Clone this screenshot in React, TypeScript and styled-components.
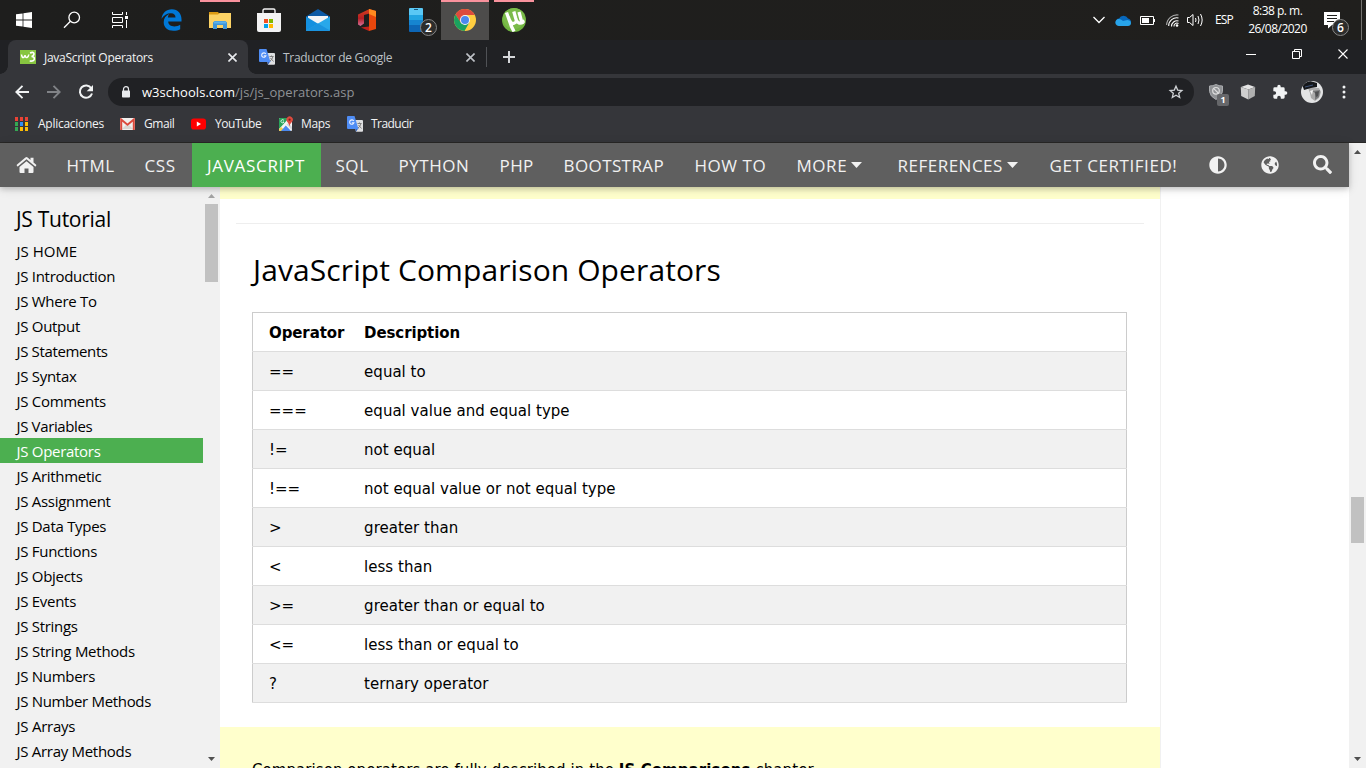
import React from 'react';
import styled, { createGlobalStyle } from 'styled-components';
import { FaAdjust, FaGlobeAmericas, FaSearch } from 'react-icons/fa';

const UI_FONT = '"Open Sans", "Noto Sans", sans-serif';

const GlobalStyle = createGlobalStyle`
  * { box-sizing: border-box; }
  body { margin: 0; background: #fff; }
  svg { display: block; flex: none; }
`;

const Screen = styled.div`
  width: 1366px;
  height: 768px;
  overflow: hidden;
  display: flex;
  flex-direction: column;
  font-family: ${UI_FONT};
`;

/* ---------- Windows taskbar ---------- */

const Taskbar = styled.header`
  height: 40px;
  flex: none;
  display: flex;
  background: linear-gradient(90deg, #1e1e1d, #201f1d);
  color: #fff;
`;

const TaskCell = styled.div<{ $width?: number; $active?: boolean; $line?: number; $gap?: number }>`
  position: relative;
  width: ${(p) => p.$width ?? 49}px;
  margin-left: ${(p) => p.$gap ?? 0}px;
  height: 40px;
  display: flex;
  align-items: center;
  justify-content: center;
  background: ${(p) => (p.$active ? '#4d4c4b' : 'transparent')};
  &::before {
    content: '';
    position: absolute;
    top: 0;
    left: 50%;
    width: ${(p) => p.$line ?? 0}px;
    height: 2px;
    transform: translateX(-50%);
    background: #f9929d;
  }
`;

const CountBadge = styled.span<{ $left: number }>`
  position: absolute;
  left: ${(p) => p.$left}px;
  top: 19px;
  width: 17px;
  height: 17px;
  border: 1px solid #868686;
  border-radius: 50%;
  background: #2d2d2c;
  color: #fff;
  font-size: 12px;
  font-weight: 600;
  line-height: 15px;
  text-align: center;
`;

const Tray = styled.div`
  margin-left: auto;
  display: flex;
  width: 279px;
`;

const Language = styled.div`
  width: 34px;
  line-height: 39px;
  font-size: 12px;
  letter-spacing: -0.8px;
  text-align: center;
`;

const Clock = styled.div`
  width: 73px;
  padding-top: 2px;
  text-align: center;
  font-size: 12px;
  line-height: 18px;
  letter-spacing: -0.5px;
`;

const ShowDesktop = styled.div`
  width: 5px;
  margin-left: 10px;
  height: 40px;
  border-left: 1px solid #73726f;
`;

/* ---------- Browser window ---------- */

const TabStrip = styled.div`
  height: 34px;
  flex: none;
  display: flex;
  padding-left: 8px;
  background: #202124;
`;

const Tab = styled.div<{ $active?: boolean }>`
  position: relative;
  width: ${(p) => (p.$active ? 240 : 238)}px;
  height: 34px;
  padding: 0 11px 0 ${(p) => (p.$active ? 12 : 11)}px;
  display: flex;
  align-items: center;
  gap: 8px;
  border-radius: 8px 8px 0 0;
  background: ${(p) => (p.$active ? '#35363a' : 'transparent')};
  color: ${(p) => (p.$active ? '#f1f3f4' : '#bdc1c6')};
  font-size: 12px;
  letter-spacing: -0.29px;
  ${(p) =>
    p.$active &&
    `
    &::before, &::after {
      content: '';
      position: absolute;
      bottom: 0;
      width: 8px;
      height: 8px;
    }
    &::before { left: -8px; background: radial-gradient(circle at 0 0, transparent 7.5px, #35363a 8px); }
    &::after { right: -8px; background: radial-gradient(circle at 100% 0, transparent 7.5px, #35363a 8px); }
  `}
`;

const TabTitle = styled.span`
  flex: 1;
  white-space: nowrap;
  line-height: 33px;
`;

const NewTab = styled.div`
  width: 46px;
  height: 34px;
  display: flex;
  align-items: center;
  justify-content: center;
  background: linear-gradient(#505256, #505256) 0 7px / 1px 20px no-repeat;
`;

const WindowControls = styled.div`
  margin-left: auto;
  display: flex;
  height: 28px;
`;

const WindowButton = styled.div`
  width: 46px;
  display: flex;
  align-items: center;
  justify-content: center;
`;

const Toolbar = styled.div`
  height: 36px;
  flex: none;
  display: flex;
  align-items: center;
  padding-left: 6px;
  background: #35363a;
`;

const ToolButton = styled.div`
  position: relative;
  width: 32px;
  height: 36px;
  display: flex;
  align-items: center;
  justify-content: center;
`;

const Omnibox = styled.div`
  width: 1086px;
  height: 28px;
  margin: 0 6px;
  padding: 0 10px 0 13px;
  display: flex;
  align-items: center;
  border-radius: 14px;
  background: #202124;
`;

const Url = styled.div`
  flex: 1;
  margin-left: 11px;
  font-size: 13px;
  line-height: 27px;
  letter-spacing: 0.04px;
  color: #8f9296;
`;

const Host = styled.span`
  color: #fff;
`;

const BlockCount = styled.span`
  position: absolute;
  left: 17px;
  top: 20px;
  width: 12px;
  height: 12px;
  border-radius: 2px;
  background: #66676a;
  color: #fff;
  font-size: 9px;
  font-weight: 700;
  line-height: 12px;
  text-align: center;
`;

const Bookmarks = styled.div`
  height: 33px;
  flex: none;
  padding: 0 0 5px 14px;
  display: flex;
  align-items: center;
  background: #35363a;
  border-bottom: 1px solid #292827;
`;

const Bookmark = styled.div<{ $width: number; $gap?: number; $track: number }>`
  width: ${(p) => p.$width}px;
  display: flex;
  align-items: center;
  gap: ${(p) => p.$gap ?? 8}px;
  color: #f1f3f4;
  font-size: 12px;
  line-height: 20px;
  letter-spacing: ${(p) => p.$track}px;
`;

/* ---------- Web page ---------- */

const Viewport = styled.div`
  flex: 1;
  display: flex;
  min-height: 0;
`;

const Page = styled.div`
  width: 1349px;
  display: flex;
  flex-direction: column;
  min-height: 0;
`;

const NavBar = styled.nav`
  position: relative;
  z-index: 1;
  height: 44px;
  flex: none;
  display: flex;
  background: #5f5f5f;
  box-shadow: 0 2px 5px rgba(0, 0, 0, 0.16), 0 2px 10px rgba(0, 0, 0, 0.12);
  color: #f1f1f1;
`;

const NavItem = styled.a<{ $width: number; $active?: boolean; $track?: number }>`
  width: ${(p) => p.$width}px;
  padding-left: ${(p) => (p.$active ? 15 : 14.5)}px;
  display: flex;
  align-items: center;
  gap: 4px;
  white-space: nowrap;
  background: ${(p) => (p.$active ? '#4caf50' : 'transparent')};
  color: ${(p) => (p.$active ? '#fff' : '#f1f1f1')};
  font-size: 17px;
  line-height: 45px;
  letter-spacing: ${(p) => p.$track ?? 0.55}px;
`;

const NavIcon = styled.a`
  width: 52px;
  height: 43px;
  display: flex;
  align-items: center;
  justify-content: center;
`;

const NavTools = styled.div`
  display: flex;
  margin-left: -1px;
`;

const Columns = styled.div`
  flex: 1;
  min-height: 0;
  display: flex;
`;

const Sidebar = styled.aside`
  width: 220px;
  display: flex;
  background: #f1f1f1;
`;

const Menu = styled.div`
  width: 203px;
  padding-top: 14px;
  overflow: hidden;
`;

const MenuTitle = styled.h2`
  margin: 0 0 1px;
  padding-left: 16px;
  font-size: 21px;
  font-weight: 400;
  line-height: 36px;
  letter-spacing: -0.28px;
`;

const MenuItem = styled.a<{ $active?: boolean; $track?: number }>`
  display: block;
  height: 25px;
  padding-left: 16.5px;
  font-size: 15px;
  line-height: 27px;
  letter-spacing: ${(p) => p.$track ?? -0.29}px;
  background: ${(p) => (p.$active ? '#4caf50' : 'transparent')};
  color: ${(p) => (p.$active ? '#fff' : '#000')};
`;

const ScrollBar = styled.div`
  width: 17px;
  flex: none;
  display: flex;
  flex-direction: column;
  align-items: center;
  background: #f1f1f1;
  padding: 7px 0;
`;

const Thumb = styled.div<{ $offset: number; $length: number }>`
  width: 13px;
  height: ${(p) => p.$length}px;
  margin: ${(p) => p.$offset}px 0 auto;
  background: #c1c1c1;
`;

const Article = styled.main`
  width: 941px;
  border-right: 1px solid #f1f1f1;
  overflow: hidden;
`;

const NoteEnd = styled.div`
  height: 12px;
  background: #ffffcc;
`;

const Rule = styled.hr`
  height: 1px;
  margin: 24px 16px 0;
  border: 0;
  background: #eee;
`;

const Heading = styled.h2`
  margin: 23px 32px 19px;
  padding-left: 1px;
  font-size: 30px;
  font-weight: 400;
  line-height: 46px;
  letter-spacing: 0.1px;
`;

const Table = styled.table`
  width: 875px;
  margin-left: 32px;
  border-collapse: collapse;
  border: 1px solid #ccc;
  font: 15px 'DejaVu Sans', Verdana, sans-serif;
`;

const Row = styled.tr<{ $shaded?: boolean }>`
  height: 39px;
  border-bottom: 1px solid #ddd;
  background: ${(p) => (p.$shaded ? '#f1f1f1' : '#fff')};
`;

const Cell = styled.td<{ $first?: boolean; $head?: boolean }>`
  width: ${(p) => (p.$first ? '103px' : 'auto')};
  padding: 1px 8px 0 ${(p) => (p.$first ? 16 : 8.6)}px;
  font-weight: ${(p) => (p.$head ? 700 : 400)};
  letter-spacing: ${(p) => (p.$head ? -0.1 : 0.02)}px;
`;

const Note = styled.div`
  height: 60px;
  margin-top: 24px;
  padding: 32px 32px 0;
  background: #ffffcc;
  font: 15px/22px 'DejaVu Sans', Verdana, sans-serif;
  letter-spacing: 0.07px;
  white-space: nowrap;
`;

/* ---------- Drawings ---------- */

const WindowsLogo = () => (
  <svg width="16" height="16" viewBox="0 0 16 16" fill="#fff">
    <path d="M0 2.3 6.6 1.4v6.2H0zM7.4 1.3 16 0v7.6H7.4zM0 8.4h6.6v6.2L0 13.7zM7.4 8.4H16V16l-8.6-1.3z" />
  </svg>
);

const TaskSearch = () => (
  <svg width="18" height="18" viewBox="0 0 18 18" fill="none" stroke="#fff" strokeWidth="1.3">
    <circle cx="11.2" cy="6.5" r="5.3" />
    <path d="M7.4 10.3 1 16.7" />
  </svg>
);

const TaskView = () => (
  <svg width="16" height="16" viewBox="0 0 16 16" fill="none" stroke="#fff">
    <path d="M.5 0v2.500h10V0M.5 16v-2.500h10V16M14.500 0v3M14.500 8v8" />
    <path d="M.5 5.500h10v5H.5z" />
    <path d="M13 4h3v3h-3z" fill="#fff" stroke="none" />
  </svg>
);

const EdgeIcon = () => (
  <svg width="21" height="22" viewBox="0 0 21 22" fill="#0078d7">
    <path d="M.5 9.800C1.300 3.700 5.300.2 10.800.2c6.300 0 9.700 4.600 9.700 10v2.300H7.200c.2 3.300 2.800 4.900 6.100 4.900 2.300 0 4.200-.7 5.900-1.700v4.500c-1.900 1-4.200 1.600-6.800 1.600-5.700 0-9.700-3.200-9.700-8.500 0-3.600 2-6.700 5.400-8.200-.8 1-1.100 2.200-1.200 3.400h7.600c0-2.700-1.500-4.300-4.500-4.300C6 4.200 2.500 6.200.5 9.800z" />
  </svg>
);

const ExplorerIcon = () => (
  <svg width="22" height="18" viewBox="0 0 22 18">
    <path d="M0 1h9l1.500 2H22v5H0z" fill="#dc9b13" />
    <path d="M0 3.500h9L10.500 2H22v15H0z" fill="#fcd365" />
    <path d="M4 18v-6.500L5.500 10h11l1.500 1.500V18h-4v-4H8v4z" fill="#3f96d8" />
    <path d="M5 10.500h12v2H5z" fill="#5db2ea" />
  </svg>
);

const StoreIcon = () => (
  <svg width="24" height="24" viewBox="0 0 24 24">
    <path d="M6 6V2.500Q6 1 7.500 1h9Q18 1 18 2.500V6" fill="none" stroke="#f3f3f3" strokeWidth="1.400" />
    <path d="M0 5h24v17q0 2-2 2H2q-2 0-2-2z" fill="#f3f3f3" />
    <path d="M7 11h4v4H7z" fill="#f25022" />
    <path d="M12 11h4v4h-4z" fill="#7fba00" />
    <path d="M7 16h4v4H7z" fill="#00a4ef" />
    <path d="M12 16h4v4h-4z" fill="#ffb900" />
  </svg>
);

const MailIcon = () => (
  <svg width="24" height="22" viewBox="0 0 24 22">
    <path d="M0 7.500 12 0l12 7.500V12H0z" fill="#0c59a4" />
    <path d="M2 7h20v8H2z" fill="#f2f4f6" />
    <path d="M0 7.500 24 22H1.500Q0 22 0 20.500z" fill="#1490df" />
    <path d="M24 7.500 0 21.500q.5.5 1.500.5h21q1.500 0 1.500-1.500z" fill="#28a8ea" />
    <path d="M12 14.500 0 21.500q.5.5 1.500.5h21q1 0 1.500-.5z" fill="#1a93de" />
  </svg>
);

const OfficeIcon = () => (
  <svg width="18" height="22" viewBox="0 0 18 22">
    <defs>
      <linearGradient id="office-left" x1="0" y1="0" x2="0" y2="1">
        <stop offset="0" stopColor="#d8401c" />
        <stop offset=".55" stopColor="#b51f24" />
        <stop offset="1" stopColor="#d5709b" />
      </linearGradient>
    </defs>
    <path d="M0 5.500 11.500 0v4.500L6 6v8.500L2.500 17 0 15.500z" fill="url(#office-left)" />
    <path d="M11 0l7 2v18l-7 2z" fill="#e8470c" />
    <path d="M11 0l7 2v6l-7-3z" fill="#ff8a1f" />
    <path d="M3 18.500l8-1V22z" fill="#c2201c" />
  </svg>
);

const PhoneIcon = () => (
  <svg width="14" height="24" viewBox="0 0 14 24">
    <path d="M0 1q0-1 1-1h12q1 0 1 1v7H0z" fill="#5ac8f5" />
    <path d="M0 7h14v5H0z" fill="#22a5e2" />
    <path d="M0 12h14v5H0z" fill="#1685d0" />
    <path d="M0 17h14v6q0 1-1 1H1q-1 0-1-1z" fill="#0d66b5" />
    <path d="M5 1.500h4" stroke="#15577c" />
  </svg>
);

const ChromeIcon = () => (
  <svg width="22" height="22" viewBox="0 0 22 22">
    <circle cx="11" cy="11" r="11" fill="#ffcd40" />
    <path d="M11 6h9.800A11 11 0 0 0 1.500 5.500L6.500 13.500z" fill="#dd4b3e" />
    <path d="M1.500 5.500A11 11 0 0 0 10.500 22l4.800-8.400L6.700 13.500z" fill="#1aa15f" />
    <circle cx="11" cy="11" r="5" fill="#f4f4f4" />
    <circle cx="11" cy="11" r="4" fill="#4a88ee" />
  </svg>
);

const TorrentIcon = () => (
  <svg width="24" height="24" viewBox="0 0 24 24">
    <clipPath id="torrent-clip"><circle cx="12" cy="12" r="12" /></clipPath>
    <g clipPath="url(#torrent-clip)">
      <path d="M0 0h24v24H0z" fill="#6fb33f" />
      <circle cx="12" cy="10" r="11" fill="#7bbb4a" />
      <path d="M4.500 4.500 9.500 18.500 12 23.500M6.300 9Q8.500 16.500 12 15.300T13.600 10L11.800 3.500M14 11.500Q16 17 21.500 14M17 4l2 7.500Q19.800 14 22.500 13" fill="none" stroke="#fff" strokeWidth="3.300" />
    </g>
  </svg>
);

const Chevron = () => (
  <svg width="12" height="8" viewBox="0 0 12 8" fill="none" stroke="#fff" strokeWidth="1.300">
    <path d="m.5 1 5.500 5.500L11.500 1" />
  </svg>
);

const CloudIcon = () => (
  <svg width="16" height="11" viewBox="0 0 16 11">
    <path d="M1 7.500a3.500 3.500 0 0 1 3-4A5 5 0 0 1 13 3.500 4 4 0 0 1 16 7.500z" fill="#0768bd" />
    <path d="M4 11a3.500 3.500 0 0 1-3-5.500Q4 2.500 8 6L12.500 5Q16 5.500 16 8.300 15.700 11 13 11z" fill="#28a4e9" />
  </svg>
);

const BatteryIcon = () => (
  <svg width="15" height="9" viewBox="0 0 15 9">
    <path d="M.5.5h13v8H.5z" fill="none" stroke="#fff" />
    <path d="M2 2h7v5H2zM14 3h1v3h-1z" fill="#fff" />
  </svg>
);

const WifiIcon = () => (
  <svg width="13" height="13" viewBox="0 0 13 13" fill="none" stroke="#fff" strokeWidth="1.100">
    <path d="M.6 11A10.500 10.500 0 0 1 12.500 1" stroke="#aaa" />
    <path d="M2.700 12A8 8 0 0 1 12.500 4M5.500 12.500A5.500 5.500 0 0 1 12.500 7" />
    <path d="M8 12.500A3 3 0 0 1 12.500 9.500" />
    <circle cx="11" cy="11.500" r="1.300" fill="#fff" stroke="none" />
  </svg>
);

const VolumeIcon = () => (
  <svg width="17" height="14" viewBox="0 0 17 14" fill="none" stroke="#fff">
    <path d="M.5 4.500h2L6 1.500v11L2.500 9.500h-2zM8.500 5q1 2 0 4M11 3q2 4 0 8M13.500 1q3.300 6 0 12" />
  </svg>
);

const NoticeIcon = () => (
  <svg width="17" height="17" viewBox="0 0 17 17">
    <path d="M0 0h16v13h-8l-4 3.500V13H0z" fill="#fff" />
    <path d="M3 3.500h10M3 6.500h10M3 9.500h7" stroke="#20201f" />
  </svg>
);

const W3Icon = () => (
  <svg width="16" height="14" viewBox="0 0 16 14">
    <rect width="16" height="14" fill="#87c540" />
    <path d="M1.500 4.500Q2 8 3.500 7.500T5 5Q5.500 8 7 7.500T8.800 4.500" fill="none" stroke="#fff" strokeWidth="1.500" />
    <path d="M10 3q4-1.500 4 .800T11.500 6.500Q14.500 6.500 14.300 9T9.700 11" fill="none" stroke="#fff" strokeWidth="1.600" />
  </svg>
);

const TranslateIcon = () => (
  <svg width="16" height="16" viewBox="0 0 16 16">
    <path d="M6 4h9q1 0 1 1v10q0 .8-1 .8H9z" fill="#dfe0e2" />
    <path d="M8 12h3.500L9 15.800z" fill="#3564c0" />
    <path d="M0 1q0-1 1-1h6.500L11.500 13H1q-1 0-1-1z" fill="#4f8df5" />
    <path d="M6.800 5A2.200 2.200 0 1 0 7 6.700H4.800" fill="none" stroke="#e9f0ff" strokeWidth="1.100" />
    <path d="M10.500 7.500h4M12.500 6.500v1M14 7.500q-1 3.500-3 4.500M11.500 9l3 3.500" fill="none" stroke="#777" strokeWidth=".9" />
  </svg>
);

const CloseIcon = ({ size = 8, color = '#e8eaed', weight = 1.6 }: { size?: number; color?: string; weight?: number }) => (
  <svg width={size} height={size} viewBox="0 0 8 8" stroke={color} strokeWidth={(weight * 8) / size}>
    <path d="m.4.400 7.200 7.200M7.600.4.400 7.600" />
  </svg>
);

const Arrow = ({ color, flip }: { color: string; flip?: boolean }) => (
  <svg width="14" height="14" viewBox="0 0 14 14" fill="none" stroke={color} strokeWidth="1.900">
    <path d={flip ? 'M0 7h12.500M6.500.800 12.700 7l-6.200 6.200' : 'M14 7H1.500M7.500.800 1.300 7l6.200 6.200'} />
  </svg>
);

const ReloadIcon = () => (
  <svg width="16" height="16" viewBox="0 0 16 16">
    <path d="M13.300 4.200A6.200 6.200 0 1 0 14 9.500" fill="none" stroke="#f1f3f4" strokeWidth="2" />
    <path d="M15 1v6.300H8.700z" fill="#f1f3f4" />
  </svg>
);

const LockIcon = () => (
  <svg width="10" height="12" viewBox="0 0 10 12">
    <path d="M2.500 5V3.200a2.500 2.500 0 0 1 5 0V5" fill="none" stroke="#e8eaed" strokeWidth="1.200" />
    <rect x="1" y="4.500" width="8" height="7" rx=".8" fill="#e8eaed" />
  </svg>
);

const StarIcon = () => (
  <svg width="16" height="16" viewBox="0 0 16 16" fill="none" stroke="#d0d3d6" strokeWidth="1.300">
    <path d="m8 2.200 1.700 3.900 4.200.4-3.200 2.800 1 4.200L8 11.300l-3.700 2.200 1-4.200-3.200-2.800 4.200-.4z" />
  </svg>
);

const ShieldIcon = () => (
  <svg width="14" height="16" viewBox="0 0 14 16">
    <path d="M.5 2Q4 2 7 .5 10 2 13.500 2v5.500Q13 12.500 7 15.500 1 12.500.5 7.500z" fill="#8f9194" stroke="#a9abae" />
    <circle cx="7" cy="6.800" r="3.300" fill="none" stroke="#dedede" strokeWidth="1.200" />
    <path d="m4.800 4.600 4.400 4.400" stroke="#dedede" strokeWidth="1.200" />
  </svg>
);

const CubeIcon = () => (
  <svg width="16" height="16" viewBox="0 0 16 16">
    <path d="m8 .5 7 2.500L8.500 5.500 1 3z" fill="#e4e4e4" />
    <path d="m.8 3 7.500 2.500v10L1.200 12z" fill="#cfcfcf" />
    <path d="m8.300 5.500 6.900-2.500-.4 9-6.500 3.500z" fill="#b0b0b0" />
  </svg>
);

const PuzzleIcon = () => (
  <svg width="16" height="16" viewBox="0 0 24 24" fill="#f1f3f4">
    <path d="M20.500 11H19V7a2 2 0 0 0-2-2h-4V3.500a2.500 2.500 0 0 0-5 0V5H4a2 2 0 0 0-2 2v3.800h1.500a2.700 2.700 0 0 1 0 5.400H2V20a2 2 0 0 0 2 2h3.800v-1.500a2.700 2.700 0 0 1 5.400 0V22H17a2 2 0 0 0 2-2v-4h1.500a2.500 2.500 0 0 0 0-5z" />
  </svg>
);

const AvatarIcon = () => (
  <svg width="22" height="22" viewBox="0 0 22 22">
    <clipPath id="avatar-clip"><circle cx="11" cy="11" r="11" /></clipPath>
    <g clipPath="url(#avatar-clip)">
      <path d="M0 0h22v22H0z" fill="#e2e3e4" />
      <path d="M7 7h11l2 4-2 6-4 3-4-3-1-5z" fill="#aaa" />
      <path d="m11 10 3 2v7l4-3 1-7z" fill="#77787a" />
      <path d="m14 11 4-1-1 5-2 1z" fill="#4f5052" />
      <path d="M1 3 9 0l7 2v4l-6 1-7 2z" fill="#15171a" />
      <path d="m4 6 8-2" stroke="#42577c" />
      <path d="M9 10l3-1-1 5z" fill="#f5f5f5" />
    </g>
  </svg>
);

const DotsIcon = () => (
  <svg width="4" height="14" viewBox="0 0 4 14" fill="#f1f3f4">
    <circle cx="2" cy="2" r="1.500" />
    <circle cx="2" cy="7" r="1.500" />
    <circle cx="2" cy="12" r="1.500" />
  </svg>
);

const AppsIcon = () => (
  <svg width="14" height="14" viewBox="0 0 14 14">
    {['#ea4335', '#ea4335', '#ea4335', '#34a853', '#2f8df5', '#fbbc05', '#34a853', '#fbbc05', '#fbbc05'].map((c, i) => (
      <rect key={i} x={1 + (i % 3) * 5} y={Math.floor(i / 3) * 5} width="3" height="4" fill={c} />
    ))}
  </svg>
);

const GmailIcon = () => (
  <svg width="15" height="12" viewBox="0 0 15 12">
    <rect width="15" height="12" rx="1" fill="#f1efed" />
    <path d="m2 11 4-4 1.500 1L9 7l4 4z" fill="#d8d5d2" />
    <path d="M1.200 12V1.500l6.300 5.200 6.300-5.200V12" fill="none" stroke="#db4a3d" strokeWidth="2" />
  </svg>
);

const YouTubeIcon = () => (
  <svg width="15" height="12" viewBox="0 0 15 12">
    <rect y=".5" width="15" height="11" rx="2.800" fill="#f00" />
    <path d="m5.800 3.600 4.200 2.400-4.200 2.400z" fill="#fff" />
  </svg>
);

const MapsIcon = () => (
  <svg width="16" height="16" viewBox="0 0 16 16">
    <rect x="1" y="2" width="13" height="13" rx="1" fill="#f4f4f4" />
    <path d="M1 3q0-1 1-1h9L1 13z" fill="#29a35a" />
    <path d="m1 13.500 2-2.500 4.500 4H2q-1 0-1-1z" fill="#f5cf48" />
    <path d="M3 15 7.800 9.500 13 15z" fill="#4a88ee" />
    <path d="m8.500 8.500 2-1.500L14 11v3z" fill="#d5d7da" />
    <path d="M6 4.500A1.600 1.600 0 1 0 6 6H4.800" fill="none" stroke="#e5f5ea" strokeWidth=".9" />
    <path d="M11.500 10.500Q11 7.500 9 5.500A3.200 3.200 0 1 1 14.300 5.500Q12 7.500 11.500 10.500z" fill="#df4b3e" />
    <circle cx="11.600" cy="3.700" r="1.100" fill="#7c231d" />
  </svg>
);

const HomeIcon = () => (
  <svg width="21" height="19" viewBox="-.5 -2 21 19" fill="#f1f1f1">
    <path d="M10 4.200 17 10V15q0 1-1 1h-4v-4.500H8V16H4q-1 0-1-1V10z" />
    <path d="M8.900.5q1.100-.9 2.200 0l2.900 2.400V.8h3v4.600l2.700 2.300q.4.400 0 .9l-.5.600q-.4.400-.8 0L10 2.300 1.600 9.200q-.4.400-.8 0l-.5-.6q-.4-.5 0-.9z" />
  </svg>
);

const ScrollArrow = ({ down, faint }: { down?: boolean; faint?: boolean }) => (
  <svg width="7" height="4" viewBox="0 0 7 4" fill={faint ? '#a3a3a3' : '#505050'}>
    <path d={down ? 'M0 0h7L3.500 4z' : 'M0 4h7L3.500 0z'} />
  </svg>
);

/* ---------- Content ---------- */

const menuItems: [string, number?][] = [
  ['JS HOME', 0], ['JS Introduction'], ['JS Where To'], ['JS Output'], ['JS Statements', -0.36], ['JS Syntax'],
  ['JS Comments'], ['JS Variables', -0.36], ['JS Operators'], ['JS Arithmetic'], ['JS Assignment'], ['JS Data Types'],
  ['JS Functions'], ['JS Objects'], ['JS Events'], ['JS Strings'], ['JS String Methods', -0.25], ['JS Numbers'],
  ['JS Number Methods', -0.32], ['JS Arrays', -0.25], ['JS Array Methods'],
];

const navItems: { label: string; width: number; track?: number; caret?: boolean }[] = [
  { label: 'HTML', width: 78 },
  { label: 'CSS', width: 62 },
  { label: 'JAVASCRIPT', width: 129, track: 0.7 },
  { label: 'SQL', width: 63 },
  { label: 'PYTHON', width: 101 },
  { label: 'PHP', width: 64, track: 0.4 },
  { label: 'BOOTSTRAP', width: 131, track: 0.4 },
  { label: 'HOW TO', width: 102 },
  { label: 'MORE', width: 101, caret: true },
  { label: 'REFERENCES', width: 152, track: 0.5, caret: true },
  { label: 'GET CERTIFIED!', width: 158 },
];

const operators: [string, string][] = [
  ['==', 'equal to'],
  ['===', 'equal value and equal type'],
  ['!=', 'not equal'],
  ['!==', 'not equal value or not equal type'],
  ['>', 'greater than'],
  ['<', 'less than'],
  ['>=', 'greater than or equal to'],
  ['<=', 'less than or equal to'],
  ['?', 'ternary operator'],
];

export default function App() {
  return (
    <Screen>
      <GlobalStyle />
      <Taskbar>
        <TaskCell $width={48}><WindowsLogo /></TaskCell>
        <TaskCell $width={48}><TaskSearch /></TaskCell>
        <TaskCell $width={48}><TaskView /></TaskCell>
        <TaskCell $width={48} $gap={3}><EdgeIcon /></TaskCell>
        <TaskCell $line={40}><ExplorerIcon /></TaskCell>
        <TaskCell><StoreIcon /></TaskCell>
        <TaskCell><MailIcon /></TaskCell>
        <TaskCell><OfficeIcon /></TaskCell>
        <TaskCell>
          <PhoneIcon />
          <CountBadge $left={29}>2</CountBadge>
        </TaskCell>
        <TaskCell $active $line={48} $width={48} $gap={1}><ChromeIcon /></TaskCell>
        <TaskCell $line={40}><TorrentIcon /></TaskCell>
        <Tray>
          <TaskCell $width={24}><Chevron /></TaskCell>
          <TaskCell $width={24}><CloudIcon /></TaskCell>
          <TaskCell $width={25}><BatteryIcon /></TaskCell>
          <TaskCell $width={24}><WifiIcon /></TaskCell>
          <TaskCell $width={23}><VolumeIcon /></TaskCell>
          <Language>ESP</Language>
          <Clock>
            <div>8:38 p. m.</div>
            <div>26/08/2020</div>
          </Clock>
          <TaskCell $width={37}>
            <NoticeIcon />
            <CountBadge $left={18}>6</CountBadge>
          </TaskCell>
          <ShowDesktop />
        </Tray>
      </Taskbar>

      <TabStrip>
        <Tab $active>
          <W3Icon />
          <TabTitle>JavaScript Operators</TabTitle>
          <CloseIcon size={9} />
        </Tab>
        <Tab>
          <TranslateIcon />
          <TabTitle>Traductor de Google</TabTitle>
          <CloseIcon size={9} color="#bdc1c6" />
        </Tab>
        <NewTab>
          <svg width="12" height="12" viewBox="0 0 12 12" stroke="#d5d7da" strokeWidth="2">
            <path d="M6 0v12M0 6h12" />
          </svg>
        </NewTab>
        <WindowControls>
          <WindowButton>
            <svg width="10" height="1" viewBox="0 0 10 1"><path d="M0 0h10v1H0z" fill="#fff" /></svg>
          </WindowButton>
          <WindowButton>
            <svg width="10" height="10" viewBox="0 0 10 10" fill="none" stroke="#fff">
              <path d="M.5 2.500h7v7h-7zM2.500 2.500v-2h7v7h-2" />
            </svg>
          </WindowButton>
          <WindowButton><CloseIcon size={10} color="#fff" weight={1.1} /></WindowButton>
        </WindowControls>
      </TabStrip>

      <Toolbar>
        <ToolButton><Arrow color="#f1f3f4" /></ToolButton>
        <ToolButton><Arrow color="#818387" flip /></ToolButton>
        <ToolButton><ReloadIcon /></ToolButton>
        <Omnibox>
          <LockIcon />
          <Url><Host>w3schools.com</Host>/js/js_operators.asp</Url>
          <StarIcon />
        </Omnibox>
        <ToolButton>
          <ShieldIcon />
          <BlockCount>1</BlockCount>
        </ToolButton>
        <ToolButton><CubeIcon /></ToolButton>
        <ToolButton><PuzzleIcon /></ToolButton>
        <ToolButton><AvatarIcon /></ToolButton>
        <ToolButton><DotsIcon /></ToolButton>
      </Toolbar>

      <Bookmarks>
        <Bookmark $width={106} $gap={10} $track={-0.27}><AppsIcon />Aplicaciones</Bookmark>
        <Bookmark $width={71} $gap={9} $track={-0.45}><GmailIcon />Gmail</Bookmark>
        <Bookmark $width={87} $gap={9} $track={-0.45}><YouTubeIcon />YouTube</Bookmark>
        <Bookmark $width={69} $gap={7} $track={-0.38}><MapsIcon />Maps</Bookmark>
        <Bookmark $width={80} $track={-0.55}><TranslateIcon />Traducir</Bookmark>
      </Bookmarks>

      <Viewport>
        <Page>
          <NavBar>
            <NavIcon><HomeIcon /></NavIcon>
            {navItems.map((item) => (
              <NavItem key={item.label} $width={item.width} $track={item.track} $active={item.label === 'JAVASCRIPT'}>
                {item.label}
                {item.caret && (
                  <svg width="11" height="6" viewBox="0 0 11 6" fill="#f1f1f1"><path d="M0 0h11L5.500 6z" /></svg>
                )}
              </NavItem>
            ))}
            <NavTools>
              <NavIcon><FaAdjust size={18} /></NavIcon>
              <NavIcon><FaGlobeAmericas size={18} /></NavIcon>
              <NavIcon><FaSearch size={19} /></NavIcon>
            </NavTools>
          </NavBar>
          <Columns>
            <Sidebar>
              <Menu>
                <MenuTitle>JS Tutorial</MenuTitle>
                {menuItems.map(([label, track]) => (
                  <MenuItem key={label} $track={track} $active={label === 'JS Operators'}>{label}</MenuItem>
                ))}
              </Menu>
              <ScrollBar>
                <ScrollArrow faint />
                <Thumb $offset={6} $length={78} />
                <ScrollArrow down />
              </ScrollBar>
            </Sidebar>
            <Article>
              <NoteEnd />
              <Rule />
              <Heading>JavaScript Comparison Operators</Heading>
              <Table>
                <tbody>
                  <Row>
                    <Cell $first $head>Operator</Cell>
                    <Cell $head>Description</Cell>
                  </Row>
                  {operators.map(([symbol, meaning], i) => (
                    <Row key={symbol} $shaded={i % 2 === 0}>
                      <Cell $first>{symbol}</Cell>
                      <Cell>{meaning}</Cell>
                    </Row>
                  ))}
                </tbody>
              </Table>
              <Note>
                Comparison operators are fully described in the <b>JS Comparisons</b> chapter.
              </Note>
            </Article>
          </Columns>
        </Page>
        <ScrollBar>
          <ScrollArrow />
          <Thumb $offset={343} $length={46} />
          <ScrollArrow down />
        </ScrollBar>
      </Viewport>
    </Screen>
  );
}
